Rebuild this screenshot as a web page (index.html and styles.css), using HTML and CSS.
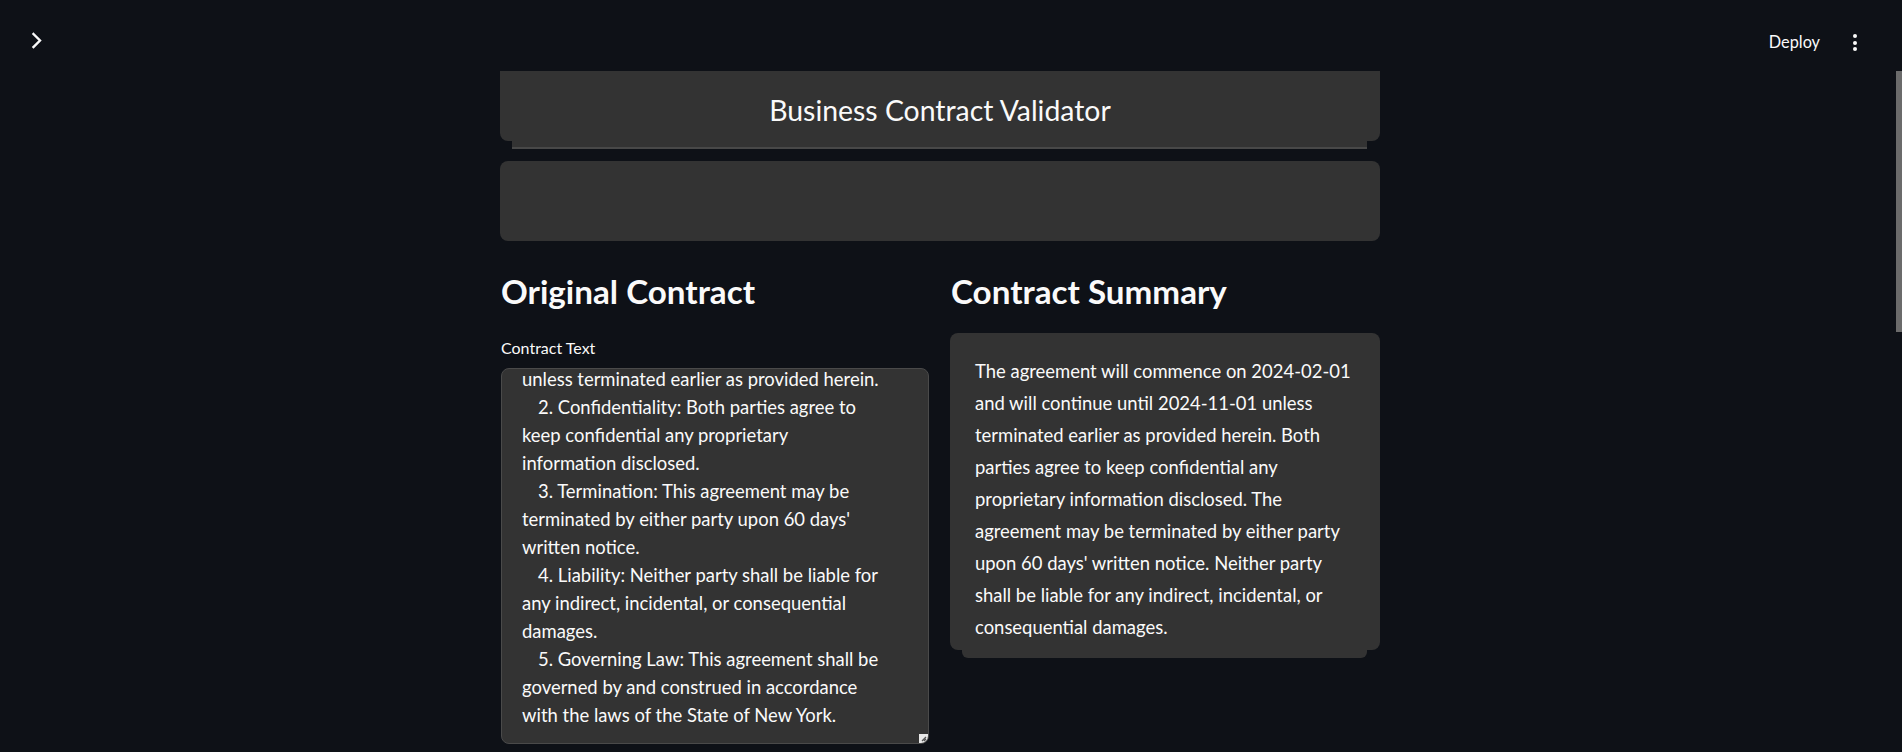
FILE: index.html
```html
<!DOCTYPE html>
<html lang="en">
<head>
<meta charset="utf-8">
<title>Business Contract Validator</title>
<link rel="stylesheet" href="styles.css">
</head>
<body>
<header class="topbar">
  <button class="sidebar-toggle" aria-label="Open sidebar">
    <svg width="12" height="17" viewBox="0 0 12 17"><path d="M2.5 2 L9 8.5 L2.5 15" fill="none" stroke="#fafafa" stroke-width="2.4" stroke-linecap="square"/></svg>
  </button>
  <div class="topbar-actions">
    <span class="deploy">Deploy</span>
    <span class="kebab" aria-label="Main menu"><i></i><i></i><i></i></span>
  </div>
</header>

<main class="page">
  <div class="container">
    <div class="title-card">
      <h1 class="title">Business Contract Validator</h1>
    </div>
    <div class="title-under"></div>

    <div class="empty-card"></div>

    <div class="columns">
      <section class="col">
        <h2 class="section-head">Original Contract</h2>
        <label class="field-label">Contract Text</label>
        <div class="textarea">
          <div class="textarea-inner">
            <p>unless terminated earlier as provided herein.</p>
            <p class="item">2. Confidentiality: Both parties agree to keep confidential any proprietary information disclosed.</p>
            <p class="item">3. Termination: This agreement may be terminated by either party upon 60 days' written notice.</p>
            <p class="item">4. Liability: Neither party shall be liable for any indirect, incidental, or consequential damages.</p>
            <p class="item">5. Governing Law: This agreement shall be governed by and construed in accordance with the laws of the State of New York.</p>
          </div>
          <svg class="resize" width="9" height="9" viewBox="0 0 9 9"><rect width="9" height="9" fill="#e8e8e8"/><path d="M3 7 L7 3 M5 7 L7 5" stroke="#555" stroke-width="1.3"/></svg>
        </div>
      </section>

      <section class="col">
        <h2 class="section-head">Contract Summary</h2>
        <div class="summary-card">
          <p>The agreement will commence on 2024-02-01 and will continue until 2024-11-01 unless terminated earlier as provided herein. Both parties agree to keep confidential any proprietary information disclosed. The agreement may be terminated by either party upon 60 days' written notice. Neither party shall be liable for any indirect, incidental, or consequential damages.</p>
        </div>
        <div class="summary-under"></div>
      </section>
    </div>
  </div>
</main>

<div class="scroll-thumb"></div>
</body>
</html>
```
FILE: styles.css
```css
* { box-sizing: border-box; }

html, body {
  margin: 0;
  padding: 0;
  background: #0e1117;
  color: #fafafa;
  font-family: "Lato", "Liberation Sans", sans-serif;
  overflow: hidden;
}

body {
  width: 1902px;
  height: 752px;
}

/* ---------- top bar ---------- */
.topbar {
  height: 71px;
  display: flex;
  align-items: flex-start;
  justify-content: space-between;
  padding: 32px 0 0 31px;
}

.sidebar-toggle {
  background: none;
  border: 0;
  padding: 0;
  margin: 0;
  width: 12px;
  height: 17px;
  display: block;
}

.sidebar-toggle svg { display: block; }

.topbar-actions {
  display: flex;
  align-items: center;
  gap: 33px;
  padding-right: 45px;
}

.deploy {
  font-size: 16.3px;
  line-height: 20px;
  color: #fafafa;
}

.kebab {
  display: flex;
  flex-direction: column;
  gap: 2.5px;
  width: 4px;
  padding-top: 1px;
}

.kebab i {
  display: block;
  width: 4px;
  height: 4px;
  border-radius: 50%;
  background: #fafafa;
}

/* ---------- page ---------- */
.page {
  width: 1880px;
}

.container {
  width: 880px;
  margin: 0 auto;
}

.title-card {
  background: #333333;
  height: 70px;
  border-radius: 0 0 8px 8px;
  padding-top: 22px;
}

.title {
  margin: 0;
  text-align: center;
  font-weight: 400;
  font-size: 28.4px;
  line-height: 34px;
  color: #fafafa;
}

.title-under {
  margin: 0 13px 0 12px;
  height: 8px;
  background: #333333;
  border-bottom: 2px solid #484848;
}

.empty-card {
  margin-top: 12px;
  height: 80px;
  background: #333333;
  border-radius: 8px;
}

/* ---------- columns ---------- */
.columns {
  display: grid;
  grid-template-columns: 429px 430px;
  column-gap: 21px;
  margin-top: 30px;
}

.col {
  display: flex;
  flex-direction: column;
}

.section-head {
  margin: 0;
  font-size: 33.2px;
  line-height: 40px;
  font-weight: 700;
  padding-left: 1px;
}

.field-label {
  margin-top: 27px;
  font-size: 16px;
  line-height: 20px;
  padding-left: 1px;
}

.textarea {
  position: relative;
  margin-top: 10px;
  margin-left: 1px;
  height: 376px;
  background: #333333;
  border: 1px solid #4a4a4a;
  border-radius: 8px;
  overflow: hidden;
  padding: 0 45px 0 20px;
}

.textarea-inner {
  margin-top: -4px;
  font-size: 18.45px;
  line-height: 28px;
  color: #fafafa;
}

.textarea-inner p {
  margin: 0;
}

.textarea-inner p.item {
  text-indent: 16px;
}

.resize {
  position: absolute;
  right: 0;
  bottom: 0;
  display: block;
}

.summary-card {
  margin-top: 22px;
  background: #333333;
  border-radius: 8px;
  padding: 22px 24px 7px 25px;
}

.summary-card p {
  margin: 0;
  font-size: 18.45px;
  line-height: 32px;
  color: #fafafa;
}

.summary-under {
  margin: 0 13px 0 12px;
  height: 8px;
  background: #333333;
  border-radius: 0 0 6px 6px;
}

/* ---------- scrollbar thumb overlay ---------- */
.scroll-thumb {
  position: absolute;
  right: 0;
  top: 71px;
  width: 6px;
  height: 261px;
  background: #6b6b6b;
}
```
